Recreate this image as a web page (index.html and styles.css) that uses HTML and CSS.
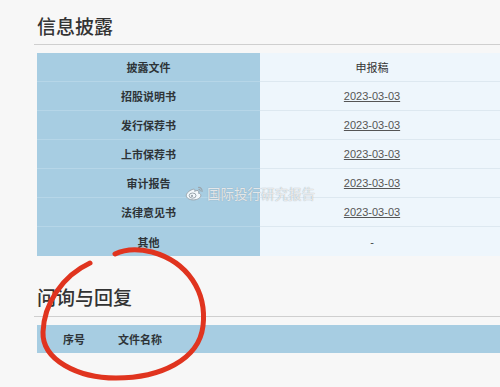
FILE: index.html
```html
<!DOCTYPE html>
<html lang="zh">
<head>
<meta charset="utf-8">
<link rel="stylesheet" href="styles.css">
</head>
<body>
<div class="page">
  <section class="sec">
    <h2 class="title">信息披露</h2>
    <div class="table">
      <div class="row"><div class="lc">披露文件</div><div class="rc head">申报稿</div></div>
      <div class="row"><div class="lc">招股说明书</div><div class="rc"><a>2023-03-03</a></div></div>
      <div class="row"><div class="lc">发行保荐书</div><div class="rc"><a>2023-03-03</a></div></div>
      <div class="row"><div class="lc">上市保荐书</div><div class="rc"><a>2023-03-03</a></div></div>
      <div class="row"><div class="lc">审计报告</div><div class="rc"><a>2023-03-03</a></div></div>
      <div class="row"><div class="lc">法律意见书</div><div class="rc"><a>2023-03-03</a></div></div>
      <div class="row last"><div class="lc">其他</div><div class="rc dash">-</div></div>
    </div>
  </section>
  <section class="sec sec2">
    <h2 class="title">问询与回复</h2>
    <div class="bar"><span class="c1">序号</span><span class="c2">文件名称</span></div>
  </section>
</div>

<div class="wm">
  <svg class="wb" width="20" height="16" viewBox="0 0 20 16">
    <path d="M8.5 4.2c-3.3 0.6-7.2 3.6-7.2 6.4 0 2.4 3.1 4.3 7 4.3 4.4 0 7.5-2.2 7.5-4.5 0-1.6-1.5-2.3-2.3-2.1 0.7-1.6 0.2-3-1.6-2.8-1 0.1-1.8 0.6-2.2 0.9 0.4-1.4 0.2-2.5-1.2-2.2z" fill="rgba(255,255,255,0.85)" stroke="#9aa5ad" stroke-width="1"/>
    <ellipse cx="7.6" cy="10.6" rx="3.4" ry="2.6" fill="none" stroke="#9aa5ad" stroke-width="1"/>
    <circle cx="7" cy="10.9" r="1.1" fill="#9aa5ad"/>
    <path d="M13.6 2.4c2.2 0 3.8 1.7 3.4 4" fill="none" stroke="#9aa5ad" stroke-width="1.2" stroke-linecap="round"/>
    <path d="M13.8 4.3c1 0 1.6 0.7 1.4 1.7" fill="none" stroke="#9aa5ad" stroke-width="1.1" stroke-linecap="round"/>
  </svg>
  <span class="wt">国际投行研究报告</span>
</div>

<svg class="circle" width="500" height="387" viewBox="0 0 500 387">
  <path d="M90 263 C62 276 44 304 43 332 C42 360 78 378 116 378 C160 378 199 360 203 326 C207 292 188 262 152 252 C136 248 123 250 115 254" fill="none" stroke="#e0341f" stroke-width="5" stroke-linecap="round"/>
</svg>
</body>
</html>
```

FILE: styles.css
```css
html, body {
  margin: 0;
  padding: 0;
  background: #f7f7f7;
  overflow: hidden;
  width: 500px;
  height: 387px;
}
body {
  font-family: "Noto Sans CJK SC", "Liberation Sans", sans-serif;
  color: #333;
  position: relative;
}
.page {
  padding-left: 37px;
}
.sec {
  padding-top: 13px;
}
.sec2 {
  padding-top: 28px;
}
.title {
  margin: 0 0 0 -3px;
  padding: 0 0 5px 3px;
  font-size: 19px;
  line-height: 26px;
  font-weight: 500;
  color: #333;
  border-bottom: 1px solid #cfcfcf;
  width: 480px;
}
.sec .table {
  margin-top: 8px;
  width: 463px;
}
.row {
  display: grid;
  grid-template-columns: 223px 1fr;
  height: 29px;
}
.lc {
  background: #a7cde2;
  border-bottom: 1px solid #b6d6e8;
  display: flex;
  align-items: center;
  justify-content: center;
  font-size: 11px;
  font-weight: 700;
  color: #2e3438;
}
.rc {
  background: #eef6fc;
  border-bottom: 1px solid #dde8f0;
  display: flex;
  align-items: center;
  justify-content: center;
  padding-right: 16px;
  font-size: 11px;
  color: #444;
}
.row.last .lc, .row.last .rc {
  border-bottom: none;
}
.rc.head {
  font-weight: 400;
  color: #333;
}
.rc a {
  font-family: "Liberation Sans", Arial, sans-serif;
  font-size: 11px;
  color: #555;
  text-decoration: underline;
}
.rc.dash {
  font-family: "Liberation Sans", Arial, sans-serif;
}
.sec2 .title {
  padding-bottom: 6px;
  width: 470px;
}
.bar {
  margin-top: 8px;
  height: 28px;
  background: #a7cde2;
  display: flex;
  align-items: center;
  padding-left: 26px;
  gap: 33px;
  font-size: 11px;
  font-weight: 700;
  color: #2e3438;
  width: 437px;
}
.wm {
  position: absolute;
  left: 185px;
  top: 183px;
  display: flex;
  align-items: center;
  gap: 2px;
}
.wt {
  font-size: 13.5px;
  color: rgba(255, 255, 255, 0.75);
  text-shadow: 0 0 1px #8c979f;
}
.circle {
  position: absolute;
  left: 0;
  top: 0;
}
```
